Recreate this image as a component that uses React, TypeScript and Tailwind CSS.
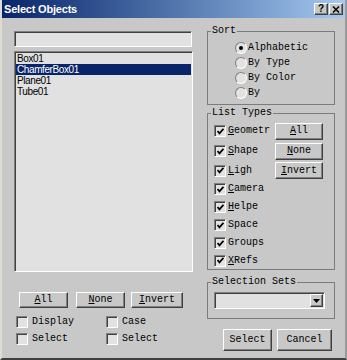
import type { ReactNode } from 'react'

const raised =
  'bg-[#c8c8c8] border border-t-white border-l-white border-b-[#404040] border-r-[#404040] shadow-[inset_-1px_-1px_#808080]'
const sunken =
  'border border-t-[#808080] border-l-[#808080] border-b-white border-r-white shadow-[inset_1px_1px_#404040]'

function Btn({ className, children }: { className: string; children: ReactNode }) {
  return (
    <button className={`${raised} flex items-center justify-center text-[10px] leading-none text-black ${className}`}>
      {children}
    </button>
  )
}

function Check({ checked }: { checked?: boolean }) {
  return (
    <span className={`${sunken} w-[12px] h-[12px] shrink-0 flex items-center justify-center bg-[#e2e2e2]`}>
      {checked && (
        <svg width="7" height="7" viewBox="0 0 7 7">
          <polyline points="0.5,3 2.5,5.3 6.5,0.8" fill="none" stroke="#000" strokeWidth="1.8" />
        </svg>
      )}
    </span>
  )
}

function Radio({ checked }: { checked?: boolean }) {
  return (
    <span className="w-[12px] h-[12px] shrink-0 rounded-full bg-[#e2e2e2] border border-t-[#808080] border-l-[#808080] border-b-white border-r-white flex items-center justify-center">
      {checked && <span className="w-[4px] h-[4px] rounded-full bg-black" />}
    </span>
  )
}

function Group({ label, className, children }: { label: string; className: string; children: ReactNode }) {
  return (
    <fieldset className={`border border-[#7c7c7c] p-0 m-0 min-w-0 ${className}`}>
      <legend className="ml-[3px] px-[1px] text-[10px] leading-[12px]">{label}</legend>
      {children}
    </fieldset>
  )
}

const sortItems = ['Alphabetic', 'By Type', 'By Color', 'By']

const types: { key: string; u: string; rest: string; h: string; btn?: ReactNode }[] = [
  { key: 'g', u: 'G', rest: 'eometr', h: 'h-[20px]', btn: <><u>A</u>ll</> },
  { key: 's', u: 'S', rest: 'hape', h: 'h-[20px]', btn: <><u>N</u>one</> },
  { key: 'l', u: 'L', rest: 'igh', h: 'h-[19px]', btn: <><u>I</u>nvert</> },
  { key: 'c', u: 'C', rest: 'amera', h: 'h-[18px]' },
  { key: 'h', u: 'H', rest: 'elpe', h: 'h-[18px]' },
  { key: 'sp', u: '', rest: 'Space', h: 'h-[18px]' },
  { key: 'gr', u: '', rest: 'Groups', h: 'h-[18px]' },
  { key: 'x', u: 'X', rest: 'Refs', h: 'h-[17px]' },
]

const objects = ['Box01', 'ChamferBox01', 'Plane01', 'Tube01']

export default function App() {
  return (
    <div className="w-[347px] h-[360px] flex flex-col bg-[#c8c8c8] border-l-2 border-l-[#dedbd2] border-r-2 border-r-[#9a9a9a] border-b-2 border-b-[#404040] overflow-hidden text-black font-['Liberation_Mono',monospace]">
      {/* title bar */}
      <div className="h-[18px] shrink-0 flex items-center justify-between bg-linear-to-r from-[#0a246a] to-[#a6caf0] pl-[2px] pr-[2px]">
        <span className="text-white font-bold text-[11px] tracking-[-0.2px] font-['Liberation_Sans',Arial,sans-serif]">
          Select Objects
        </span>
        <div className="flex gap-[1px]">
          <span className={`${raised} w-[14px] h-[12px] flex items-center justify-center text-[10px] font-bold leading-none font-['Liberation_Sans',Arial,sans-serif]`}>
            ?
          </span>
          <span className={`${raised} w-[14px] h-[12px] flex items-center justify-center`}>
            <svg width="8" height="7" viewBox="0 0 8 7">
              <path d="M1 0.5 L7 6.5 M7 0.5 L1 6.5" stroke="#000" strokeWidth="1.5" />
            </svg>
          </span>
        </div>
      </div>

      <div className="flex">
        {/* left column */}
        <div className="ml-[12px] w-[179px] flex flex-col">
          <div className={`${sunken} mt-[13px] h-[16px] w-[178px] bg-[#e1e1e1]`} />
          <div className={`${sunken} mt-[4px] h-[221px] bg-[#e1e1e1] p-[1px] pt-[1px] font-['Liberation_Sans',Arial,sans-serif] text-[10px] tracking-[-0.4px]`}>
            {objects.map((o, i) => (
              <div
                key={o}
                className={`h-[11px] leading-[11px] pl-[1px] ${i === 1 ? 'bg-[#0a246a] text-white' : ''}`}
              >
                {o}
              </div>
            ))}
          </div>

          <div className="mt-[20px] flex">
            <Btn className="ml-[5px] w-[49px] h-[16px]"><u>A</u>ll</Btn>
            <Btn className="ml-[8px] w-[49px] h-[16px]"><u>N</u>one</Btn>
            <Btn className="ml-[6px] w-[52px] h-[16px]"><u>I</u>nvert</Btn>
          </div>

          <div className="mt-[8px] grid grid-cols-[90px_1fr] gap-y-[5px] pl-[2px] text-[10px] leading-[12px]">
            <div className="flex items-center gap-[4px]"><Check /><span>Display</span></div>
            <div className="flex items-center gap-[4px]"><Check /><span>Case</span></div>
            <div className="flex items-center gap-[4px]"><Check /><span>Select</span></div>
            <div className="flex items-center gap-[4px]"><Check /><span>Select</span></div>
          </div>
        </div>

        {/* right column */}
        <div className="ml-[14px] w-[128px] flex flex-col text-[10px]">
          <Group label="Sort" className="mt-[7px]">
            <div className="pt-[3px] pb-[4px]">
              {sortItems.map((s, i) => (
                <div key={s} className="h-[15px] flex items-center pl-[27px] gap-[1px]">
                  <Radio checked={i === 0} />
                  <span className="leading-[12px]">{s}</span>
                </div>
              ))}
            </div>
          </Group>

          <Group label="List Types" className="mt-[2px]">
            <div className="pt-[2px]">
              {types.map((t) => (
                <div key={t.key} className={`${t.h} flex items-center pl-[6px]`}>
                  <Check checked />
                  <span className="ml-[2px] w-[47px] overflow-hidden whitespace-nowrap leading-[12px]">
                    {t.u && <u>{t.u}</u>}
                    {t.rest}
                  </span>
                  {t.btn && <Btn className="w-[48px] h-[17px]">{t.btn}</Btn>}
                </div>
              ))}
            </div>
          </Group>

          <Group label="Selection Sets" className="mt-[6px]">
            <div className="pt-[4px] pb-[9px] pl-[6px]">
              <div className={`${sunken} w-[111px] h-[17px] bg-[#e1e1e1] flex justify-end items-center pr-[1px]`}>
                <span className={`${raised} w-[13px] h-[13px] flex items-center justify-center`}>
                  <svg width="7" height="4" viewBox="0 0 7 4">
                    <path d="M0 0 H7 L3.5 4 Z" fill="#000" />
                  </svg>
                </span>
              </div>
            </div>
          </Group>

          <div className="mt-[10px] flex">
            <Btn className="ml-[16px] w-[49px] h-[22px]">Select</Btn>
            <Btn className="ml-[5px] w-[55px] h-[22px]">Cancel</Btn>
          </div>
        </div>
      </div>
    </div>
  )
}
